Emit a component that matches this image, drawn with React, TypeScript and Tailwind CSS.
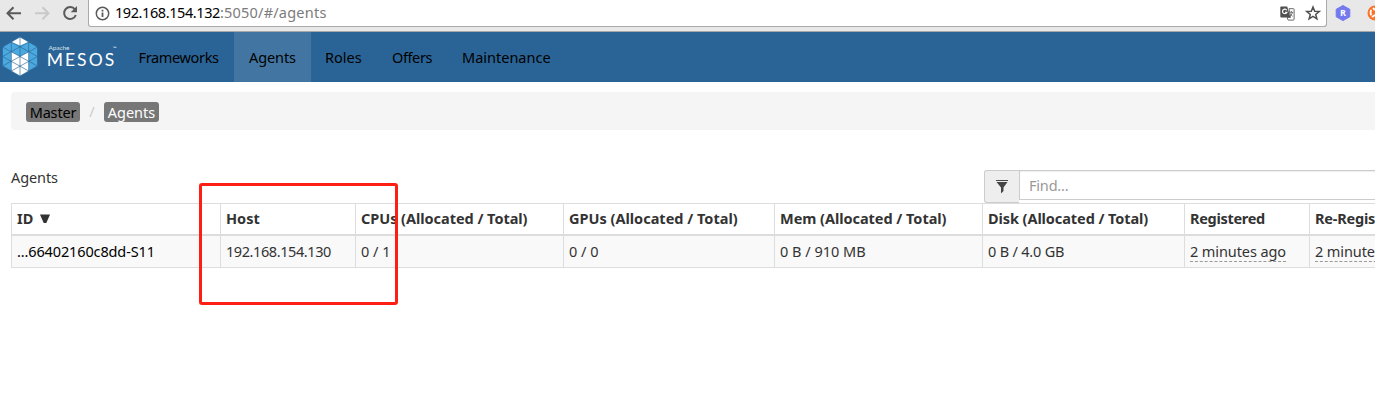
import React from "react";

type Col = { head: string; value: string; w: string; hs: string; vs: string; time?: boolean };

const cols: Col[] = [
  { head: "ID", value: "...66402160c8dd-S11", w: "w-[209px]", hs: "", vs: "text-black tracking-[-0.13px]" },
  { head: "Host", value: "192.168.154.130", w: "w-[135px]", hs: "", vs: "tracking-[-0.42px]" },
  { head: "CPUs (Allocated / Total)", value: "0 / 1", w: "w-[208px]", hs: "tracking-[-0.04px]", vs: "" },
  { head: "GPUs (Allocated / Total)", value: "0 / 0", w: "w-[211px]", hs: "", vs: "" },
  { head: "Mem (Allocated / Total)", value: "0 B / 910 MB", w: "w-[208px]", hs: "tracking-[-0.04px]", vs: "" },
  { head: "Disk (Allocated / Total)", value: "0 B / 4.0 GB", w: "w-[202px]", hs: "tracking-[-0.08px]", vs: "tracking-[-0.2px]" },
  { head: "Registered", value: "2 minutes ago", w: "w-[125px]", hs: "tracking-[-0.3px]", vs: "tracking-[-0.1px]", time: true },
  { head: "Re-Registered", value: "2 minutes ago", w: "w-[125px]", hs: "tracking-[-0.2px]", vs: "tracking-[-0.1px]", time: true },
];

function Browser() {
  return (
    <header className="flex h-8 shrink-0 items-start border-b border-[#a6a6a6] bg-[#e8e8e8]">
      <svg width="88" height="30" viewBox="0 0 88 30" fill="none" className="shrink-0">
        <path d="M21 13.2H8M13.5 7.2L7.5 13.2L13.5 19.2" stroke="#5a5a5a" strokeWidth="2" />
        <path d="M35 13.2H48M42.5 7.2L48.5 13.2L42.5 19.2" stroke="#c9c9c9" strokeWidth="2" />
        <path d="M75 9.5A6 6 0 1 0 75.8 15" stroke="#5a5a5a" strokeWidth="2" />
        <path d="M77 6v6.3h-6.3z" fill="#5a5a5a" />
      </svg>
      <div className="flex h-[27px] w-[1239px] shrink-0 items-center rounded-b-[3px] border border-t-0 border-[#a9a9a9] bg-white">
        <svg width="15" height="15" viewBox="0 0 15 15" className="ml-[6px] shrink-0">
          <circle cx="7.5" cy="7.5" r="6.2" fill="none" stroke="#5a5a5a" strokeWidth="1.5" />
          <path d="M6.6 6.5h1.8v4.6H6.6zM6.6 3.7h1.8v1.7H6.6z" fill="#5a5a5a" />
        </svg>
        <span className="ml-[5px] h-[26px] flex-1 whitespace-nowrap text-[14.5px] leading-[25px] text-black">
          <span className="tracking-[-0.42px]">192.168.154.132</span>
          <span className="tracking-[0.22px] text-[#7b7b7b]">:5050/#/agents</span>
        </span>
        <svg width="15" height="15" viewBox="0 0 15 15" className="mr-[10px] shrink-0">
          <path d="M1.2.5h6l3.2 11H1.2Q.3 11.500.3 10.600V1.400Q.3.500 1.200.500z" fill="#505050" />
          <path d="M9 2.700h4.300q.8 0 .8.800v9.800q0 .8-.8.800H8.200L7 11.500h3.500z" fill="#fff" stroke="#6a6a6a" />
          <path d="M6.800 4.200A2.300 2.300 0 1 0 7 6.200H5" fill="none" stroke="#fff" strokeWidth="1.100" />
          <path d="M9.600 6.300h3.600M11.300 5v1.300M12.500 6.300Q12 8.500 10.300 10M10 7.500l2.600 3" fill="none" stroke="#666" strokeWidth=".9" />
        </svg>
        <svg width="16" height="16" viewBox="0 0 16 16" className="mr-[5px] shrink-0">
          <path d="M8 2l1.700 4.200 4.500.3-3.500 2.900 1.200 4.400L8 11.400l-3.900 2.400 1.200-4.400L1.800 6.500l4.500-.3z" fill="none" stroke="#505050" strokeWidth="1.500" />
        </svg>
      </div>
      <svg width="48" height="28" viewBox="0 0 48 28" className="shrink-0">
        <path d="M16 5.500l6.800 3.800v7.500l-6.800 3.800-6.800-3.800V9.300z" fill="#7579ee" stroke="#7579ee" strokeWidth="1" strokeLinejoin="round" />
        <text x="16" y="16.200" fontSize="9" fontWeight="700" textAnchor="middle" fill="#fff" fontFamily="Open Sans, sans-serif">R</text>
        <circle cx="48" cy="13" r="7.500" fill="#f8742c" />
        <path d="M44.300 9.800q-1.500 3 0 5.500M46 8l2 2M45 17l3-2" fill="none" stroke="#fff" strokeWidth="1.800" />
      </svg>
    </header>
  );
}

function Logo() {
  return (
    <svg width="124" height="50" viewBox="0 0 124 50" className="shrink-0">
      <path d="M20 5L37.500 15V34L20 44L2.500 34V15z" fill="#4aa9df" />
      <path d="M20 5L28.700 9.900L20 13.500L11.300 9.900z" fill="#fff" />
      <path d="M11.300 19.800L20 24.600L28.700 19.800V39L20 44L11.300 39z" fill="#fff" />
      <path d="M2.500 15V34M11.300 10V39M20 5V44M28.700 10V39M37.500 15V34M2.500 15L20 5L37.500 15M2.500 24.500L28.700 10M2.500 34L37.500 15M11.300 39L37.500 24.500M20 44L37.500 34M11.300 10L37.500 24.500M2.500 15L37.500 34M2.500 24.500L28.700 39M2.500 34L20 44" fill="none" stroke="#2a6496" strokeWidth=".65" />
      <text x="48.500" y="18.300" fontSize="6.500" textLength="21" fill="#d5e2ec" fontFamily="Lato, sans-serif">Apache</text>
      <text x="46.700" y="34" fontSize="17.500" textLength="67.500" fill="#fff" fontFamily="Lato, sans-serif">MESOS</text>
      <text x="113" y="17.500" fontSize="4.500" fill="#fff" fontFamily="Lato, sans-serif">™</text>
    </svg>
  );
}

export default function App() {
  return (
    <div className="relative h-[412px] w-full overflow-hidden bg-white font-['Noto_Sans','Noto_Sans_CJK_SC',sans-serif] text-[14.5px] text-[#333]">
      <Browser />
      <nav className="flex h-[50px] bg-[#2a6496] leading-[50px] text-black">
        <Logo />
        <a className="w-[110px] pl-[14.5px] tracking-[-0.35px]">Frameworks</a>
        <a className="w-[77px] bg-[#4275a2] pl-[15px] tracking-[-0.1px]">Agents</a>
        <a className="w-[66px] pl-[14px]">Roles</a>
        <a className="w-[70px] pl-[15px] tracking-[-0.4px]">Offers</a>
        <a className="pl-[15px]">Maintenance</a>
      </nav>
      <main className="pl-[11px] pt-[10px]">
        <div className="flex h-[38px] items-center rounded-l bg-[#f5f5f5] pl-[15px] pt-[2px]">
          <span className="h-5 w-[54px] rounded-[3px] bg-[#777] text-center leading-[21px] tracking-[-0.15px] text-black">Master</span>
          <span className="w-6 text-center text-[#ccc]">/</span>
          <span className="h-5 w-[55px] rounded-[3px] bg-[#777] text-center leading-[21px] text-white">Agents</span>
        </div>
        <div className="flex h-[73px] items-end justify-between">
          <div className="h-9 leading-[20px] tracking-[-0.1px]">Agents</div>
          <div className="flex h-[33px] w-[391px] items-start">
            <div className="flex h-[33px] w-[35px] items-center justify-center rounded-l-[3px] border border-r-0 border-[#ccc] bg-[#eee]">
              <svg width="12" height="14" viewBox="0 0 12 14"><path d="M0 0h12v1H0zM.5 2h11L7.500 7.500V11L5 13.500V7.500z" fill="#444" /></svg>
            </div>
            <div className="h-[30px] flex-1 border border-r-0 border-[#ccc] pl-[9px] leading-[28px] tracking-[-0.2px] text-[#999] shadow-[inset_0_1px_1px_#0001]">Find...</div>
          </div>
        </div>
        <div className="flex w-[1424px] border-l border-[#ddd]">
          {cols.map((c, i) => (
            <div key={c.head} className={`${c.w} flex shrink-0 flex-col border-y border-r border-[#ddd] whitespace-nowrap`}>
              <div className="flex h-8 items-center border-b-2 border-[#ddd] pl-[5px] font-bold leading-[28px]">
                <span className={`${c.hs} -mt-0.5`}>{c.head}</span>
                {i === 0 && (
                  <svg width="10" height="10" viewBox="0 0 10 10" className="ml-[7px]"><path d="M0 .5h10L6.300 9H3.700z" fill="#333" /></svg>
                )}
              </div>
              <div className="h-[31px] bg-[#f9f9f9] pl-[5px]">
                <span className={`${c.vs} ${c.time ? "mt-[6px] inline-block h-[20px] border-b border-dashed border-[#999] leading-[18px]" : "block leading-[30px]"}`}>{c.value}</span>
              </div>
            </div>
          ))}
        </div>
      </main>
      <div className="absolute left-[199px] top-[183px] h-[122px] w-[199px] rounded-[3px] border-[3px] border-[#fd1f14]" />
    </div>
  );
}
